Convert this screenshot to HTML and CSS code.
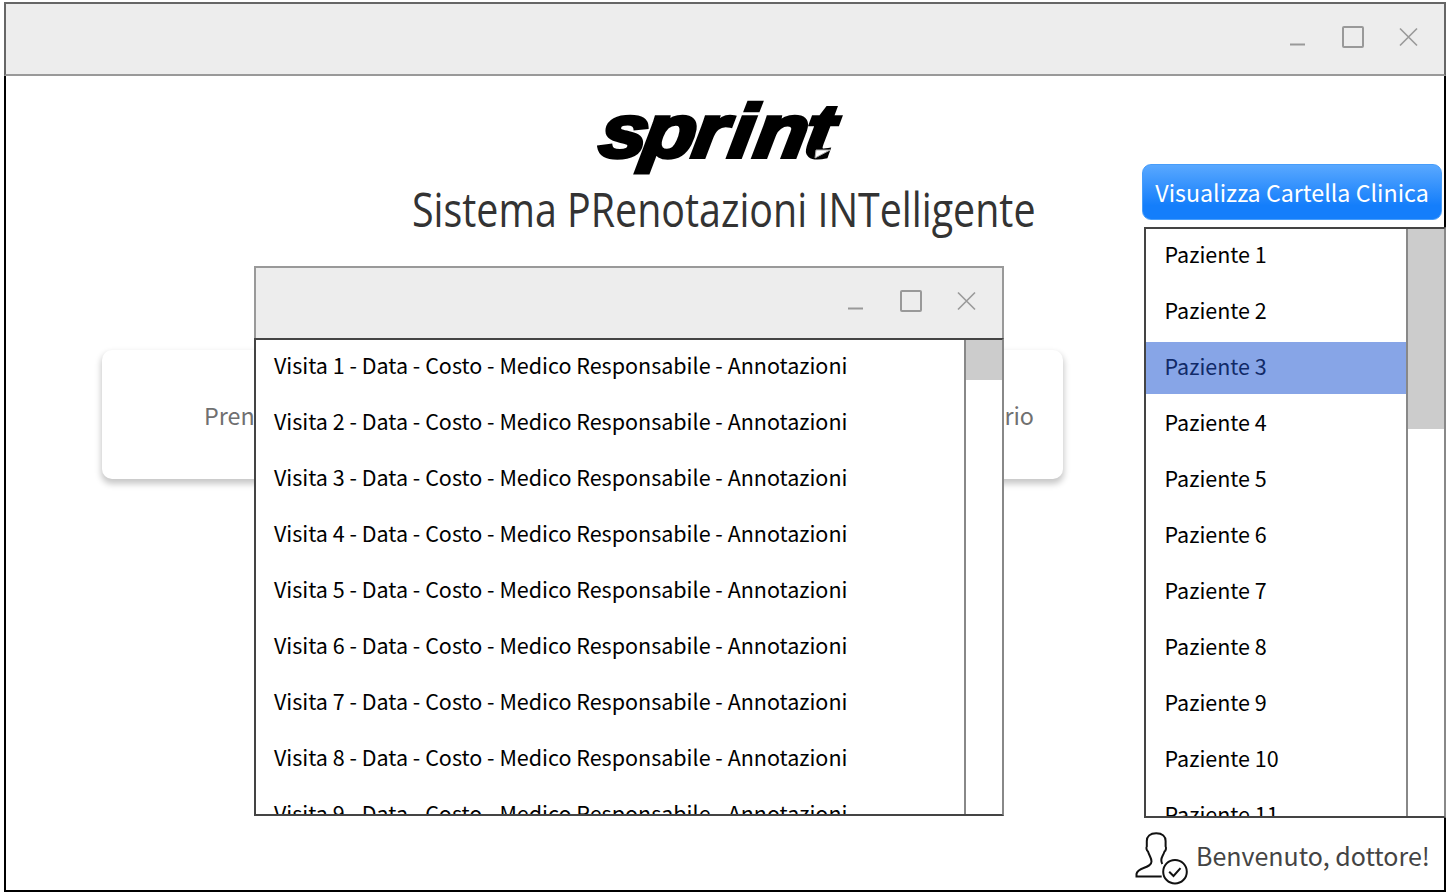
FILE: index.html
```html
<!DOCTYPE html>
<html lang="it">
<head>
<meta charset="utf-8">
<title>Sprint</title>
<link rel="stylesheet" href="styles.css">
</head>
<body>
<div class="app">
  <header class="titlebar main-bar">
    <svg class="controls" width="132" height="24" viewBox="0 0 132 24"><path class="min" d="M3 19.5H18"/><rect class="max" x="56" y="2" width="20" height="20" rx="1"/><path class="close" d="M113 3.500L130 20.500M130 3.500L113 20.500"/></svg>
  </header>
  <div class="content">
    <main class="main">
      <svg class="logo" width="256" height="84" viewBox="0 0 256 84" role="img" aria-label="sprint">
        <text class="logo-text" transform="translate(2 61) skewX(-9) scale(1.14 1)" x="1 39 83 115 137 181" y="0">sprint</text>
        <path class="logo-fold" d="M222 54L236 54L221 62Z"/>
      </svg>
      <h1 class="title"><span class="title-text">Sistema PRenotazioni INTelligente</span></h1>
      <section class="card"><span>Pren</span><span>rio</span></section>
    </main>
    <aside class="side">
      <button class="action">Visualizza Cartella Clinica</button>
      <div class="list patients">
        <ul class="rows">
          <li>Paziente 1</li><li>Paziente 2</li><li class="selected">Paziente 3</li><li>Paziente 4</li><li>Paziente 5</li><li>Paziente 6</li><li>Paziente 7</li><li>Paziente 8</li><li>Paziente 9</li><li>Paziente 10</li><li>Paziente 11</li>
        </ul>
        <div class="scroll"><div class="thumb"></div></div>
      </div>
      <div class="welcome">
        <svg class="user" width="54" height="54" viewBox="0 0 54 54"><path d="M26.700 45.600H1.500V43C2.500 36 16.500 37.500 16.500 30.500C16.500 26.500 14.500 25.500 13 20.500C11.500 19.500 11 16.500 11.800 15.500V10C11.800 5.500 15 2.200 21.200 2.200C27.500 2.200 30.600 5.500 30.600 10V15.500C31.400 16.500 31 19.500 29.500 20.500C28 25 26.300 26 26.300 29C26.300 31 26.700 32 27.300 33"/><circle cx="40" cy="40.700" r="11.800"/><path d="M34.200 40.700L38.500 45L45.500 37.200"/></svg>
        <span class="greeting">Benvenuto, dottore!</span>
      </div>
    </aside>
  </div>
</div>
<div class="dialog">
  <header class="titlebar dialog-bar">
    <svg class="controls" width="132" height="24" viewBox="0 0 132 24"><path class="min" d="M3 19.500H18"/><rect class="max" x="56" y="2" width="20" height="20" rx="1"/><path class="close" d="M113 3.500L130 20.500M130 3.500L113 20.500"/></svg>
  </header>
  <div class="list visits">
    <ul class="rows">
      <li>Visita 1 - Data - Costo - Medico Responsabile - Annotazioni</li>
      <li>Visita 2 - Data - Costo - Medico Responsabile - Annotazioni</li>
      <li>Visita 3 - Data - Costo - Medico Responsabile - Annotazioni</li>
      <li>Visita 4 - Data - Costo - Medico Responsabile - Annotazioni</li>
      <li>Visita 5 - Data - Costo - Medico Responsabile - Annotazioni</li>
      <li>Visita 6 - Data - Costo - Medico Responsabile - Annotazioni</li>
      <li>Visita 7 - Data - Costo - Medico Responsabile - Annotazioni</li>
      <li>Visita 8 - Data - Costo - Medico Responsabile - Annotazioni</li>
      <li>Visita 9 - Data - Costo - Medico Responsabile - Annotazioni</li>
    </ul>
    <div class="scroll"><div class="thumb"></div></div>
  </div>
</div>
</body>
</html>
```
FILE: styles.css
```css
* { box-sizing: border-box; }
body { margin: 0; width: 1450px; height: 894px; overflow: hidden; background: #fff; font-family: "Noto Sans CJK SC", "Noto Sans", sans-serif; position: relative; }
.app { width: 1442px; height: 890px; margin: 2px 0 0 4px; border: 2px solid #000; border-top: 0; display: flex; flex-direction: column; }
.titlebar { background: #ededed; display: flex; justify-content: flex-end; align-items: center; }
.main-bar { flex: none; height: 74px; margin: 0 -2px; padding: 0 25px 4px 0; border: 2px solid #666; border-bottom-color: #999; }
.controls { fill: none; stroke: #999; stroke-width: 2; display: block; }
.close { stroke-width: 1.600; }
.content { flex: 1; display: flex; min-height: 0; }
.main { flex: none; width: 1130px; display: flex; flex-direction: column; }
.logo { flex: none; margin: 20px 0 0 588px; overflow: visible; }
.logo-text { font: italic 900 75px "Liberation Sans", Arial, sans-serif; stroke: #000; stroke-width: 4; }
.logo-fold { fill: #fff; stroke: #aaa; stroke-width: 1; }
.title { margin: 0; padding-left: 406px; height: 60px; font: 400 43px/58px "Open Sans", sans-serif; color: #333; white-space: nowrap; }
.title-text { display: inline-block; transform-origin: 0 50%; transform: scale(.916, 1.12); }
.card { margin: 110px 0 0 96px; width: 961px; height: 129px; padding: 0 29px 0 102px; display: flex; justify-content: space-between; align-items: center; border-radius: 10px; box-shadow: 0 4px 6px 1px rgba(0,0,0,.22); font-size: 23.300px; color: #707070; }
.side { width: 310px; flex: none; display: flex; flex-direction: column; }
.action { flex: none; margin: 88px 0 0 6px; width: 300px; height: 56px; padding: 0 0 1px; border: 1px solid #479dfa; border-radius: 9px; background: linear-gradient(#59a8ff, #147efb 75%); color: #fff; font-family: inherit; font-size: 23.250px; white-space: nowrap; }
.list { display: flex; overflow: hidden; background: #fff; border: 2px solid #444; border-right-color: #888; }
.rows { flex: 1; margin: 0; padding: 0; list-style: none; font-size: 21.500px; color: #000; white-space: nowrap; }
.rows li { height: 52px; line-height: 50px; margin-bottom: 4px; padding-left: 18px; }
.rows .selected { background: #87a5e7; color: #112a68; }
.scroll { flex: none; width: 38px; border-left: 2px solid #888; }
.thumb { background: #ccc; }
.patients { flex: none; margin: 7px 0 0 8px; width: 302px; height: 591px; }
.patients .rows { padding-top: 1px; }
.patients .rows li { line-height: 48px; padding-left: 18.500px; }
.patients .thumb { height: 200px; }
.welcome { margin: 12px 0 0 -1px; height: 56px; display: flex; align-items: center; gap: 7px; font-size: 25px; color: #444; white-space: nowrap; }
.greeting { padding-bottom: 6px; }
.user { flex: none; fill: none; stroke: #111; stroke-width: 2; }
.dialog { position: absolute; left: 254px; top: 266px; width: 750px; height: 550px; }
.dialog-bar { height: 73px; padding: 0 25px 5px 0; border: 2px solid #999; border-bottom: 0; }
.visits { height: 478px; margin-top: -1px; }
.visits .thumb { height: 40px; }
```
